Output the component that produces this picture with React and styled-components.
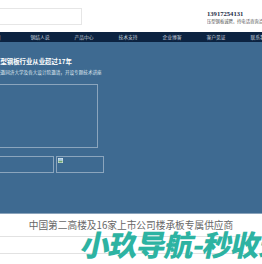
import React from "react";
import styled, { createGlobalStyle } from "styled-components";

const Global = createGlobalStyle`
  html, body { margin: 0; padding: 0; background: #fff; overflow: hidden; }
  body { font-family: "Noto Sans CJK SC", "Liberation Sans", sans-serif; }
`;

const Page = styled.div`
  position: relative;
  width: 262px;
  height: 264px;
  overflow: hidden;
`;

const Header = styled.header`
  height: 32px;
  display: flex;
  align-items: flex-start;
  justify-content: space-between;
  background: #fff;
`;

const Search = styled.div`
  margin: 8px 0 0 -20px;
  width: 100px;
  height: 15px;
  border: 1px solid #e6e6e6;
  background: #fff;
`;

const Contact = styled.div`
  margin: 10px 0 0 0;
  width: 55px;
  overflow: hidden;
  white-space: nowrap;
`;

const Phone = styled.div`
  font-family: "Liberation Serif", serif;
  font-weight: bold;
  font-size: 6.6px;
  line-height: 7px;
  color: #1b2a44;
`;

const Hint = styled.div`
  margin-top: 2px;
  font-size: 4.3px;
  line-height: 5px;
  color: #555;
`;

const Nav = styled.nav`
  height: 10px;
  background: #0c2341;
  display: flex;
  margin-left: 0;
  overflow: hidden;
`;

const NavList = styled.div`
  display: flex;
  margin-left: -26px;
`;

const NavItem = styled.div`
  width: 44px;
  flex: none;
  text-align: center;
  font-size: 4.8px;
  line-height: 10px;
  color: #c9d3de;
  white-space: nowrap;
`;

const Hero = styled.section`
  height: 172px;
  background: #3e6a91;
  border-bottom: 1px solid #8aa3bb;
  padding-top: 16px;
  box-sizing: border-box;
  overflow: hidden;
`;

const HeroTitle = styled.h2`
  margin: 0 0 0 -6px;
  font-size: 6.4px;
  line-height: 8px;
  font-weight: bold;
  color: #fff;
  white-space: nowrap;
`;

const HeroSub = styled.p`
  margin: 3px 0 0 -4px;
  font-size: 4.6px;
  line-height: 6px;
  color: #dfe7ef;
  white-space: nowrap;
`;

const Frame = styled.div`
  margin: 9px 0 0 -10px;
  width: 106px;
  height: 62px;
  border: 1px solid #8ba5bd;
`;

const Thumbs = styled.div`
  display: flex;
  gap: 2px;
  margin: 8px 0 0 -10px;
`;

const Thumb = styled.div`
  position: relative;
  width: ${(p) => p.$w}px;
  height: 15px;
  border: 1px solid #8ba5bd;
`;

const Broken = styled.svg`
  position: absolute;
  left: 1px;
  top: 1px;
`;

const Tagline = styled.div`
  height: 22px;
  border-bottom: 1px solid #e2e2e2;
  text-align: center;
  font-size: 9.7px;
  line-height: 22px;
  color: #666;
  white-space: nowrap;
`;

const Row = styled.div`
  height: 16px;
  border-bottom: 1px solid #e2e2e2;
`;

const Watermark = styled.div`
  position: absolute;
  left: 82px;
  top: 224px;
  font-family: "Noto Sans CJK SC", sans-serif;
  font-weight: 900;
  font-size: 29px;
  line-height: 38px;
  color: #2db3a2;
  white-space: nowrap;
  transform: skewX(-12deg);
  letter-spacing: -1px;
`;

const navItems = ["首页", "钢结人说", "产品中心", "技术支持", "企业博客", "客户见证", "联系我们"];

export default function App() {
  return (
    <Page>
      <Global />
      <Header>
        <Search />
        <Contact>
          <Phone>13917254131</Phone>
          <Hint>压型钢板诚聘，持电话咨询洽谈</Hint>
        </Contact>
      </Header>
      <Nav>
        <NavList>
          {navItems.map((t) => (
            <NavItem key={t}>{t}</NavItem>
          ))}
        </NavList>
      </Nav>
      <Hero>
        <HeroTitle>压型钢板行业从业超过17年</HeroTitle>
        <HeroSub>受邀同济大学及各大设计院邀请，开设专题技术讲座</HeroSub>
        <Frame />
        <Thumbs>
          <Thumb $w={62} />
          <Thumb $w={46}>
            <Broken width="5" height="5" viewBox="0 0 5 5">
              <rect x="0" y="0" width="5" height="5" fill="#e8eef2" />
              <rect x="0.5" y="2.5" width="4" height="2" fill="#6aa36a" />
              <rect x="0.5" y="0.5" width="4" height="2" fill="#9cc3e0" />
            </Broken>
          </Thumb>
        </Thumbs>
      </Hero>
      <Tagline>中国第二高楼及16家上市公司楼承板专属供应商</Tagline>
      <Row />
      <Watermark>小玖导航-秒收录</Watermark>
    </Page>
  );
}
